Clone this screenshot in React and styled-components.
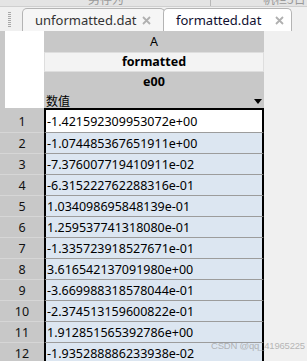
import React from "react";
import styled, { createGlobalStyle } from "styled-components";

const Global = createGlobalStyle`
  html, body { margin: 0; padding: 0; background: #f0f0f0; }
  body { font-family: "Noto Sans", "Noto Sans CJK SC", sans-serif; }
`;

const Page = styled.div`
  width: 307px;
  height: 361px;
  overflow: hidden;
  background: #f0f0f0;
  display: flex;
  flex-direction: column;
  position: relative;
`;

const TopStrip = styled.div`
  height: 6px;
  flex: none;
  background: #e4e4e4;
  border-bottom: 1px solid #cfcfcf;
  display: flex;
  overflow: hidden;
`;

const StripLabel = styled.div`
  font-family: "Noto Sans CJK SC", sans-serif;
  font-size: 12px;
  line-height: 12px;
  color: #9a9a9a;
  margin-top: -7px;
  margin-left: ${(p) => p.$ml}px;
  white-space: nowrap;
`;

const StripSep = styled.div`
  width: 1px;
  background: #b8b8b8;
  margin-left: ${(p) => p.$ml}px;
`;

const TabBar = styled.div`
  height: 24px;
  flex: none;
  display: flex;
  align-items: flex-end;
  padding-left: 8px;
  background: #f0f0f0;
`;

const Grip = styled.div`
  width: 3px;
  height: 15px;
  align-self: center;
  margin-right: 11px;
  background-image: repeating-linear-gradient(
    to bottom,
    #a8a8a8 0px,
    #a8a8a8 1px,
    transparent 1px,
    transparent 2px
  );
`;

const Tab = styled.div`
  height: 23px;
  box-sizing: border-box;
  display: flex;
  align-items: center;
  border: 1px solid #b4b4b4;
  border-bottom: none;
  border-radius: 5px 5px 0 0;
  background: ${(p) => (p.$active ? "#ffffff" : "#f6f6f6")};
  width: ${(p) => p.$w}px;
  margin-left: ${(p) => p.$ml || 0}px;
  padding-left: ${(p) => p.$pl}px;
  position: relative;
  z-index: ${(p) => (p.$active ? 2 : 1)};
  font-size: 13px;
  color: ${(p) => (p.$active ? "#101030" : "#333333")};
`;

const TabText = styled.span`
  flex: 1;
  white-space: nowrap;
  line-height: 16px;
  margin-top: -1px;
`;

const CloseX = styled.svg`
  width: 9px;
  height: 9px;
  margin-right: ${(p) => p.$mr}px;
  flex: none;
`;

const Close = ({ mr }) => (
  <CloseX $mr={mr} viewBox="0 0 9 9">
    <path d="M1 1 L8 8 M8 1 L1 8" stroke="#b0b0b0" strokeWidth="1.8" />
  </CloseX>
);

const Body = styled.div`
  flex: 1;
  display: flex;
  align-items: flex-start;
`;

const Grid = styled.div`
  display: grid;
  grid-template-columns: 44px 220px;
  grid-template-rows: 21px 20px 20px 16px 25px repeat(11, 21px);
  background: #c8c8c8;
`;

const Corner = styled.div`
  grid-row: 1 / span 4;
  background: #ffffff;
  border-left: 5px solid #c8c8c8;
`;

const HeadCell = styled.div`
  display: flex;
  align-items: center;
  justify-content: ${(p) => (p.$left ? "space-between" : "center")};
  font-size: ${(p) => (p.$cjk ? 12 : 12.5)}px;
  font-family: ${(p) =>
    p.$cjk ? '"Noto Sans CJK SC", sans-serif' : '"Noto Sans", sans-serif'};
  font-weight: ${(p) => (p.$bold ? 700 : 400)};
  color: #000;
  background: ${(p) => (p.$light ? "#f3f3f3" : "#c8c8c8")};
  box-sizing: border-box;
  border: ${(p) => (p.$light ? "1px solid #dedede" : "none")};
  padding: ${(p) => (p.$left ? "2px 2px 0 2px" : "0")};
  line-height: 16px;
`;

const Arrow = styled.svg`
  width: 8px;
  height: 5px;
  margin-right: 0px;
`;

const RowHead = styled.div`
  display: flex;
  align-items: center;
  justify-content: center;
  box-sizing: border-box;
  border-bottom: 1px solid #d6d6d6;
  padding-top: ${(p) => (p.$first ? 3 : 1)}px;
  background: #c8c8c8;
  font-size: 12.5px;
  color: #111;
`;

const Cell = styled.div`
  display: flex;
  align-items: center;
  box-sizing: border-box;
  border-left: 2px solid #000;
  border-right: 2px solid #000;
  border-top: ${(p) => (p.$first ? "2px solid #000" : "none")};
  border-bottom: 1px solid #9c9c9c;
  background: ${(p) => (p.$current ? "#ffffff" : "#dce6f1")};
  padding-left: 1px;
  padding-top: 1px;
  font-size: 12.5px;
  color: #000;
  white-space: nowrap;
  overflow: hidden;
`;

const Watermark = styled.div`
  position: absolute;
  left: 211px;
  top: 340px;
  font-family: "Liberation Sans", sans-serif;
  font-size: 9.5px;
  color: rgba(160, 160, 160, 0.75);
  letter-spacing: -0.2px;
  white-space: nowrap;
`;

const values = [
  "-1.421592309953072e+00",
  "-1.074485367651911e+00",
  "-7.376007719410911e-02",
  "-6.315222762288316e-01",
  "1.034098695848139e-01",
  "1.259537741318080e-01",
  "-1.335723918527671e-01",
  "3.616542137091980e+00",
  "-3.669988318578044e-01",
  "-2.374513159600822e-01",
  "1.912851565392786e+00",
  "-1.935288886233938e-02",
];

export default function App() {
  return (
    <Page>
      <Global />
      <TopStrip>
        <StripLabel $ml={88}>另存为</StripLabel>
        <StripSep $ml={86} />
        <StripLabel $ml={52}>帆栏5日</StripLabel>
      </TopStrip>
      <TabBar>
        <Grip />
        <Tab $w={143} $pl={12}>
          <TabText>unformatted.dat</TabText>
          <Close mr={13} />
        </Tab>
        <Tab $active $w={129} $ml={-2} $pl={12}>
          <TabText>formatted.dat</TabText>
          <Close mr={7} />
        </Tab>
      </TabBar>
      <Body>
        <Grid>
          <Corner />
          <HeadCell>A</HeadCell>
          <HeadCell $light $bold>
            formatted
          </HeadCell>
          <HeadCell $bold>e00</HeadCell>
          <HeadCell $left $cjk>
            <span>数值</span>
            <Arrow viewBox="0 0 8 5">
              <path d="M0 0 H8 L4 5 Z" fill="#000" />
            </Arrow>
          </HeadCell>
          {values.map((v, i) => (
            <React.Fragment key={i}>
              <RowHead $first={i === 0}>{i + 1}</RowHead>
              <Cell $first={i === 0} $current={i === 0}>
                {v}
              </Cell>
            </React.Fragment>
          ))}
        </Grid>
      </Body>
      <Watermark>CSDN @qq_41965225</Watermark>
    </Page>
  );
}
